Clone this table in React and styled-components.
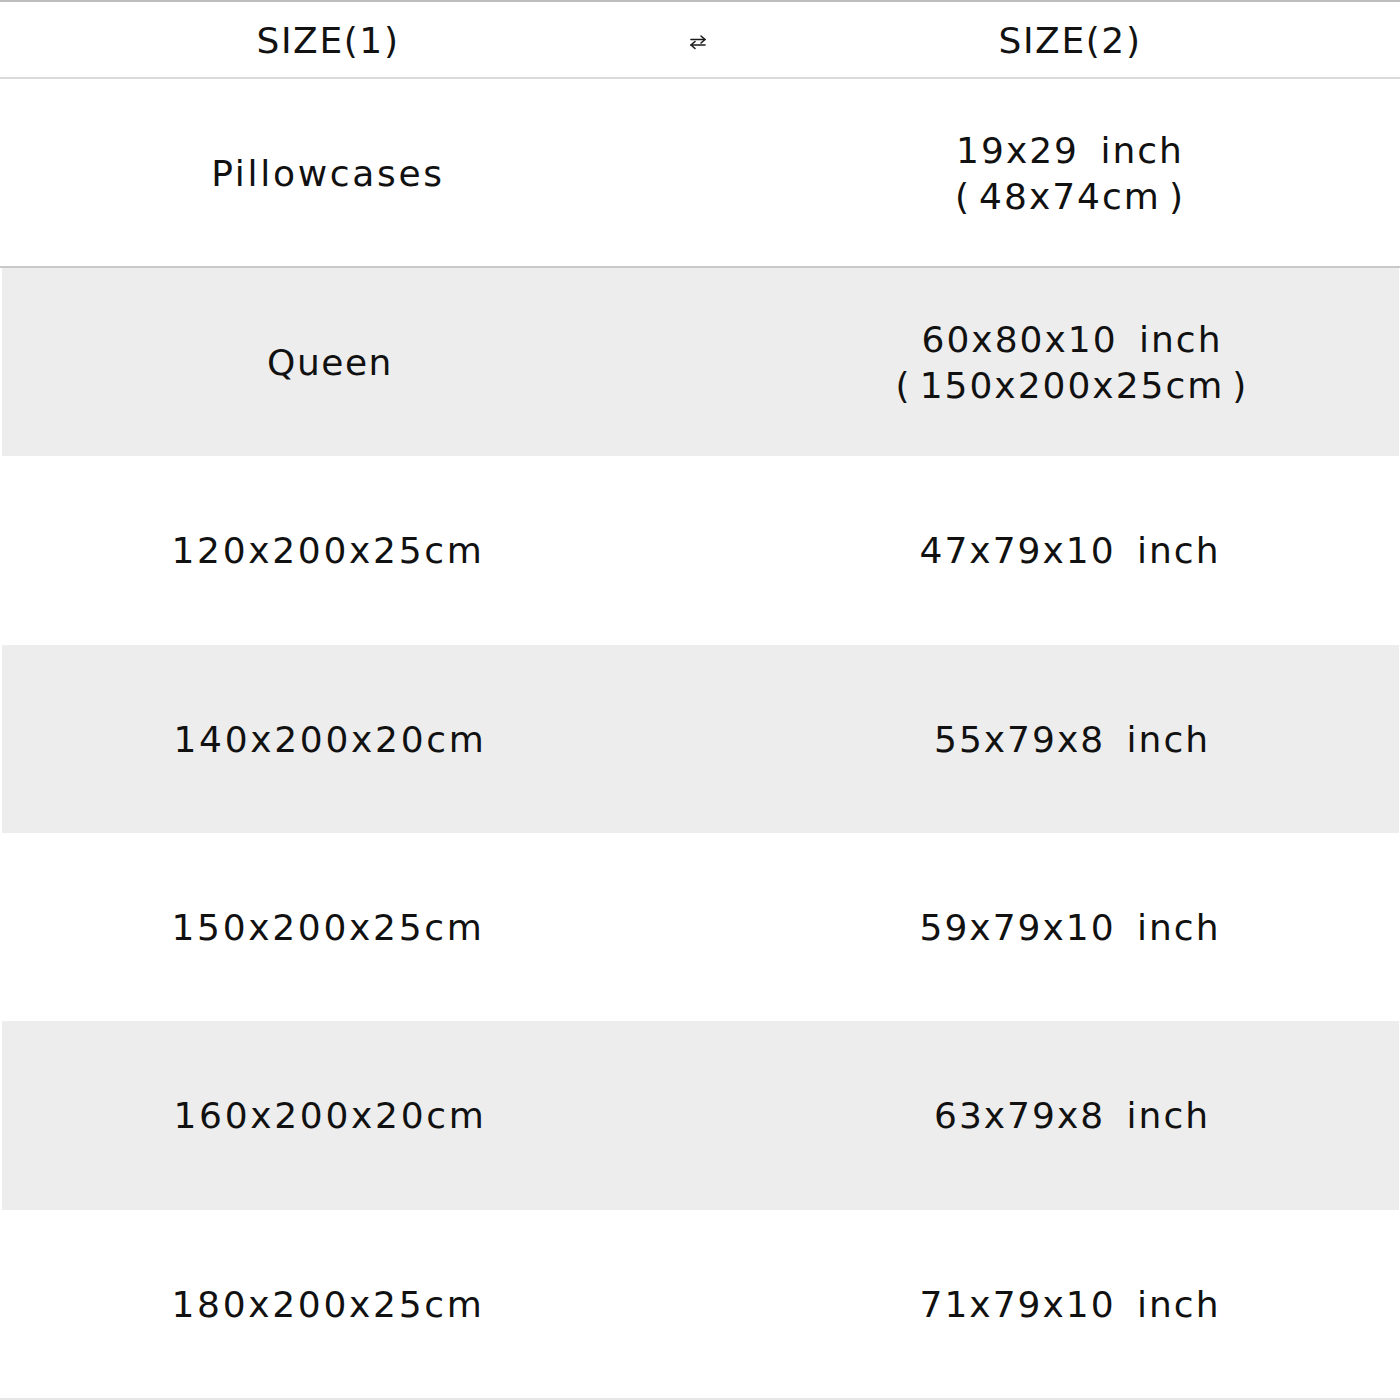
import React from "react";
import styled, { createGlobalStyle } from "styled-components";

const Global = createGlobalStyle`
  html, body { margin: 0; padding: 0; background: #ffffff; }
  body { font-family: "DejaVu Sans", "Liberation Sans", sans-serif; color: #111111; }
`;

const Table = styled.div`
  width: 1400px;
  height: 1400px;
  display: flex;
  flex-direction: column;
  background: #ffffff;
  border-bottom: 2px solid #e6e6e6;
  box-sizing: border-box;
`;

const HeaderRow = styled.div`
  display: grid;
  grid-template-columns: 656px 84px 660px;
  align-items: center;
  height: 79px;
  box-sizing: border-box;
  border-top: 2px solid #bdbdbd;
  border-bottom: 2px solid #dadada;
  flex: none;
`;

const HeadCell = styled.div`
  text-align: center;
  font-size: 36px;
  line-height: 1;
  color: #121212;
  letter-spacing: 1.6px;
  padding-top: 2px;
`;

const ArrowCell = styled.div`
  display: flex;
  justify-content: center;
  align-items: center;
  padding-top: 5px;
`;

const Row = styled.div`
  display: grid;
  grid-template-columns: 656px 84px 660px;
  align-items: center;
  box-sizing: border-box;
  background: ${(p) => (p.$shade ? "#ededed" : "#ffffff")};
  margin-left: ${(p) => (p.$shade ? "2px" : "0")};
  margin-right: ${(p) => (p.$shade ? "1px" : "0")};
  ${(p) =>
    p.$first
      ? `height: 189px; flex: none; border-bottom: 2px solid #c8c8c8;`
      : `flex: 1 1 0;`}
`;

const Cell = styled.div`
  text-align: center;
  font-size: 36px;
  line-height: 46px;
  color: #111111;
  letter-spacing: ${(p) => p.$spacing ?? 2.7}px;
  word-spacing: ${(p) => p.$words ?? 0}px;
  padding-top: 2px;
`;

const Line = styled.div`
  white-space: nowrap;
`;

const Paren = styled.span`
  margin: ${(p) => (p.$open ? "0 8px 0 0" : "0 0 0 8px")};
`;

const rows = [
  { a: "Pillowcases", inch: "19x29 inch", cm: "48x74cm", aSpacing: 2.7 },
  { a: "Queen", inch: "60x80x10 inch", cm: "150x200x25cm", aSpacing: 1.5 },
  { a: "120x200x25cm", inch: "47x79x10 inch" },
  { a: "140x200x20cm", inch: "55x79x8 inch" },
  { a: "150x200x25cm", inch: "59x79x10 inch" },
  { a: "160x200x20cm", inch: "63x79x8 inch" },
  { a: "180x200x25cm", inch: "71x79x10 inch" },
];

const SwapArrows = () => (
  <svg width="18" height="18" viewBox="0 0 18 18" fill="none" stroke="#1a1a1a" strokeWidth="1.6" strokeLinecap="round" strokeLinejoin="round">
    <path d="M2 6.5 H16" />
    <path d="M12 3 L16 6.5 L12 10" />
    <path d="M16 12 H2" />
    <path d="M6 8.5 L2 12 L6 15.5" />
  </svg>
);

export default function App() {
  return (
    <>
      <Global />
      <Table>
        <HeaderRow>
          <HeadCell>SIZE(1)</HeadCell>
          <ArrowCell>
            <SwapArrows />
          </ArrowCell>
          <HeadCell>SIZE(2)</HeadCell>
        </HeaderRow>
        {rows.map((r, i) => (
          <Row key={i} $shade={i % 2 === 1} $first={i === 0}>
            <Cell $spacing={r.aSpacing}>{r.a}</Cell>
            <div />
            <Cell $spacing={2} $words={8}>
              <Line>{r.inch}</Line>
              {r.cm && (
                <Line>
                  <Paren $open>(</Paren>
                  {r.cm}
                  <Paren>)</Paren>
                </Line>
              )}
            </Cell>
          </Row>
        ))}
      </Table>
    </>
  );
}
